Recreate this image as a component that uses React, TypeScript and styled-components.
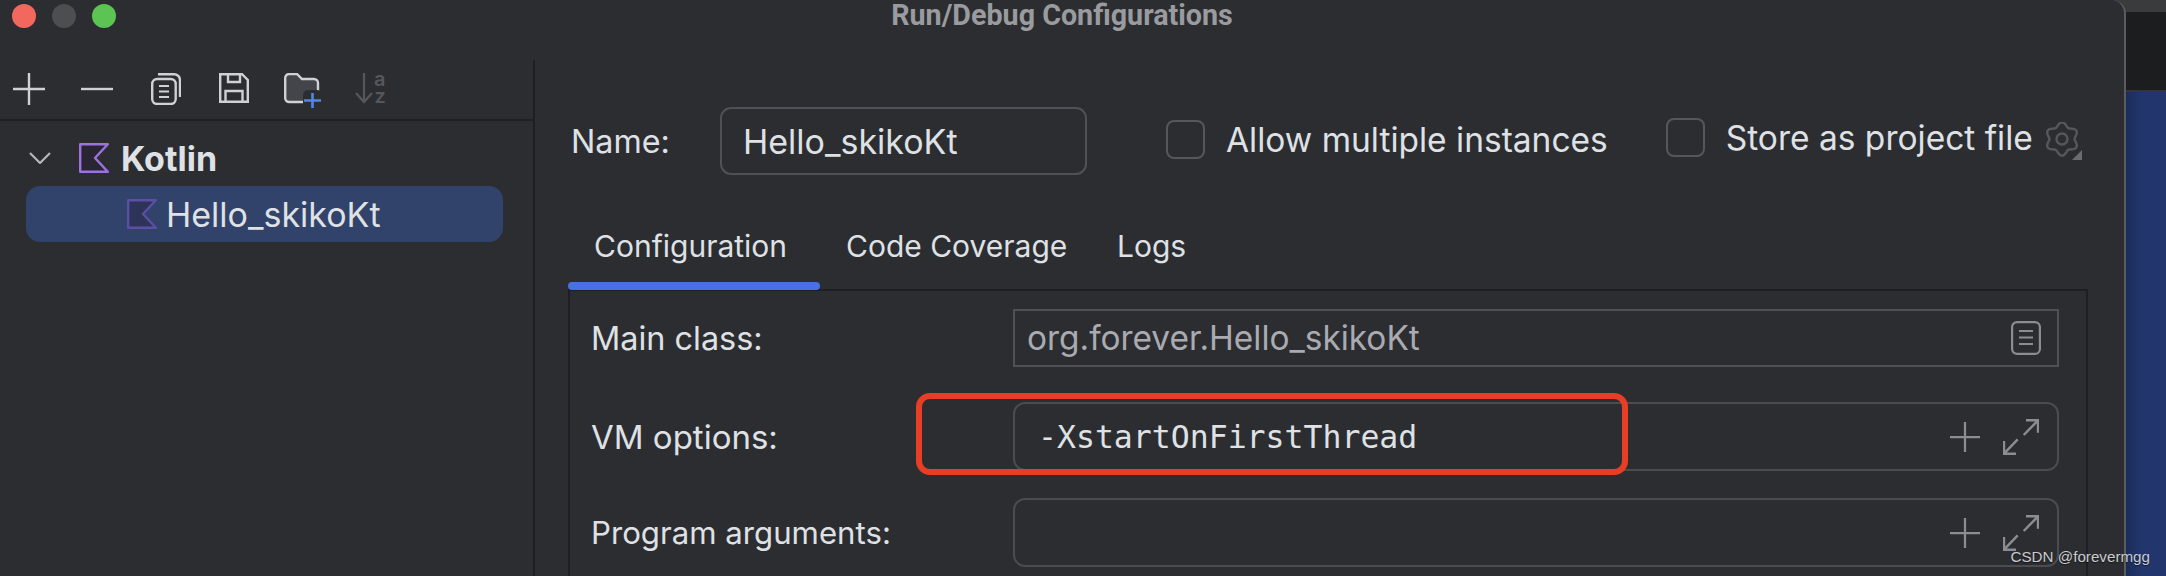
import * as React from 'react';
import styled, { createGlobalStyle } from 'styled-components';

const GlobalStyle = createGlobalStyle`
  html, body { margin: 0; padding: 0; background: #2c2d31; }
`

const Screen = styled.div`
  position: relative;
  display: flex;
  width: 2166px;
  height: 576px;
  overflow: hidden;
  background: #3a3b3d;
  font-family: Inter, "Liberation Sans", sans-serif;
  color: #dfe1e5;
`
const Window = styled.div`
  width: 2126px;
  height: 576px;
  box-sizing: border-box;
  flex: none;
  background: #2c2d31;
  border-right: 2px solid #5b5c60;
  border-top-right-radius: 14px;
  display: flex;
  flex-direction: column;
`
const TitleBar = styled.div`
  height: 60px;
  flex: none;
  display: grid;
  grid-template-columns: 1fr auto 1fr;
`
const Lights = styled.div`
  display: flex;
  gap: 16px;
  padding: 4px 0 0 12px;
`
const Light = styled.span<{ $color: string }>`
  width: 24px;
  height: 24px;
  border-radius: 50%;
  background: ${p => p.$color};
`
const Title = styled.div`
  font-family: Roboto, sans-serif;
  font-weight: 700;
  font-size: 28.7px;
  line-height: 30px;
  color: #9a9b9e;
`
const Body = styled.div`
  flex: 1;
  display: flex;
  min-height: 0;
`
const Sidebar = styled.div`
  width: 535px;
  flex: none;
  box-sizing: border-box;
  border-right: 2px solid #1e1f22;
`
const Toolbar = styled.div`
  height: 61px;
  box-sizing: border-box;
  border-bottom: 2px solid #1e1f22;
  padding: 13px 0 0 13px;
  display: grid;
  grid-template-columns: 68px 70px 68px 65px 71px auto;
  align-items: start;
`
const Tree = styled.div`
  padding-top: 22px;
`
const KotlinRow = styled.div`
  height: 30px;
  display: flex;
  align-items: center;
  padding-left: 29px;
  font-weight: 700;
  font-size: 34px;
`
const KotlinSlot = styled.span`
  display: flex;
  margin-left: 28px;
`
const KotlinLabel = styled.span`
  margin-left: 12px;
`
const SelectedRow = styled.div`
  margin: 13px 0 0 26px;
  width: 477px;
  height: 56px;
  border-radius: 14px;
  background: #31426b;
  display: flex;
  align-items: center;
  gap: 9px;
  padding-left: 101px;
  box-sizing: border-box;
  font-size: 34px;
`
const Main = styled.div`
  flex: 1;
  min-width: 0;
  padding: 47px 0 0 33px;
`
const NameRow = styled.div`
  display: flex;
  align-items: center;
  padding-left: 3px;
  height: 68px;
  font-size: 33.5px;
`
const NameLabel = styled.span`
  width: 149px;
  font-size: 32.3px;
`
const NameInput = styled.div`
  width: 367px;
  height: 68px;
  box-sizing: border-box;
  border: 2px solid #4e5157;
  border-radius: 11px;
  padding-left: 21px;
  display: flex;
  align-items: center;
  font-size: 34px;
`
const CheckGroup = styled.label<{ $left: number; $raise: number }>`
  display: flex;
  align-items: center;
  gap: 21px;
  margin-left: ${p => p.$left}px;
  margin-bottom: ${p => p.$raise}px;
`
const CheckBox = styled.span`
  width: 39px;
  height: 39px;
  box-sizing: border-box;
  border: 2px solid #55575c;
  border-radius: 8px;
`
const GearSlot = styled.span`
  display: flex;
  margin: 0 0 0 12px;
`
const Tabs = styled.div`
  display: grid;
  grid-template-columns: 252px 271px auto;
  justify-content: start;
  margin-top: 35px;
  height: 80px;
  font-size: 30px;
`
const Tab = styled.div<{ $active?: boolean }>`
  position: relative;
  padding: 18px 0 0 26px;
  line-height: 36px;
  &::after {
    content: '';
    display: ${p => (p.$active ? 'block' : 'none')};
    position: absolute;
    left: 0;
    right: 0;
    bottom: 0;
    height: 8px;
    border-radius: 4px;
    background: #4671e5;
  }
`
const Panel = styled.div`
  width: 1520px;
  height: 290px;
  margin-top: -1px;
  box-sizing: border-box;
  border: 2px solid #1e1f22;
  border-bottom: none;
  padding: 18px 27px 0 21px;
`
const FormRow = styled.div<{ $gap: number }>`
  display: grid;
  grid-template-columns: 422px 1fr;
  align-items: center;
  margin-bottom: ${p => p.$gap}px;
`
const RowLabel = styled.span<{ $size: number }>`
  font-size: ${p => p.$size}px;
`
const ReadonlyField = styled.div`
  height: 58px;
  box-sizing: border-box;
  border: 2px solid #4e5157;
  padding: 0 16px 0 12px;
  display: flex;
  align-items: center;
  justify-content: space-between;
  font-size: 33.4px;
  color: #a9abb0;
`
const EditField = styled.div`
  height: 69px;
  box-sizing: border-box;
  border: 2px solid #4a4c51;
  border-radius: 12px;
  padding: 0 18px 0 23px;
  display: flex;
  align-items: center;
  justify-content: space-between;
`
const Mono = styled.span`
  font-family: "DejaVu Sans Mono", "Liberation Mono", monospace;
  font-size: 31.5px;
`
const FieldActions = styled.span`
  display: flex;
  align-items: center;
  gap: 23px;
  margin-left: auto;
`
const Highlight = styled.div`
  position: absolute;
  left: 916px;
  top: 393px;
  width: 712px;
  height: 82px;
  box-sizing: border-box;
  border: 6px solid #e83e26;
  border-radius: 14px;
`
const Strip = styled.div`
  flex: 1;
  display: flex;
  flex-direction: column;
`
const StripTop = styled.div`
  height: 12px;
  background: #3a3b3d;
`
const StripDark = styled.div`
  height: 78px;
  background: #1c1d1f;
  border-bottom: 2px solid #343538;
`
const StripBlue = styled.div`
  flex: 1;
  background: linear-gradient(90deg, #1c2c59, #22366d 40%);
`
const Watermark = styled.div`
  position: absolute;
  right: 16px;
  bottom: 9px;
  font-family: "Liberation Sans", sans-serif;
  font-size: 15.2px;
  line-height: 20px;
  color: #c9cbce;
  text-shadow: 0 1px 1px rgba(0, 0, 0, 0.5);
`

const lineIcon = { fill: 'none', strokeWidth: 2.4 }

const PlusIcon = ({ size = 32, color = '#cfd1d5' }: { size?: number; color?: string }) => (
  <svg width={size} height={size} viewBox="0 0 32 32" stroke={color} {...lineIcon}>
    <path d="M16 0V32M0 16H32" />
  </svg>
)
const MinusIcon = () => (
  <svg width="32" height="32" viewBox="0 0 32 32" stroke="#cfd1d5" {...lineIcon}>
    <path d="M0 16H32" />
  </svg>
)
const CopyIcon = () => (
  <svg width="30" height="32" viewBox="0 0 30 32" stroke="#cfd1d5" {...lineIcon}>
    <rect x="1.2" y="6" width="23.5" height="25" rx="5" />
    <path d="M7 1.2H23a6 6 0 0 1 6 6V24" />
    <path d="M8 13H18M8 18.5H18M8 24H18" strokeWidth="2" />
  </svg>
)
const SaveIcon = () => (
  <svg width="30" height="30" viewBox="0 0 30 30" stroke="#cfd1d5" {...lineIcon}>
    <path d="M1.2 1.2H23L28.8 7V28.8H1.2Z" />
    <path d="M9 1.2V9H21V1.2M6.5 28.8V18H23.5V28.8" />
  </svg>
)
const FolderAddIcon = () => (
  <svg width="38" height="36" viewBox="0 0 38 36">
    <path
      d="M1.2 5a4 4 0 0 1 4-4H13L18 6H30a4 4 0 0 1 4 4V25a4 4 0 0 1-4 4H5.2a4 4 0 0 1-4-4Z"
      fill="#43454a"
      stroke="#cfd1d5"
      strokeWidth="2.4"
    />
    <rect x="19" y="17" width="19" height="19" rx="5" fill="#2c2d31" />
    <path d="M28.5 20V35M20 27.5H37" stroke="#5484f0" strokeWidth="2.6" fill="none" />
  </svg>
)
const SortIcon = () => (
  <svg
    width="31"
    height="31"
    viewBox="0 0 31 31"
    overflow="visible"
    fontFamily="Inter, sans-serif"
    fontWeight="600"
    fontSize="20"
    fill="#55575c"
  >
    <path d="M9 0V29M1 20L9 29L17 20" stroke="#55575c" strokeWidth="2.2" fill="none" />
    <text x="19" y="13">a</text>
    <text x="19.5" y="30">z</text>
  </svg>
)
const ChevronIcon = () => (
  <svg width="22" height="12" viewBox="0 0 22 12" fill="none" stroke="#b4b6ba" strokeWidth="2.2">
    <path d="M1 1L11 11L21 1" />
  </svg>
)
const KotlinIcon = ({ dim }: { dim?: boolean }) => (
  <svg
    width="30"
    height="30"
    viewBox="0 0 30 30"
    fill={dim ? '#2e3358' : '#2a2532'}
    stroke={dim ? '#5c4ea3' : '#9c72de'}
    strokeWidth="2.4"
    strokeLinejoin="round"
  >
    <path d="M1.2 1.2H28.8L16 15L28.8 28.8H1.2Z" />
  </svg>
)
const gearPath = () => {
  const points: string[] = []
  for (let i = 0; i < 120; i++) {
    const a = (i / 120) * Math.PI * 2
    const r = 14.6 + 2 * Math.cos(6 * a)
    const x = 17 + r * Math.sin(a)
    const y = 17 - r * Math.cos(a)
    points.push(`${x.toFixed(2)} ${y.toFixed(2)}`)
  }
  return `M${points.join('L')}Z`
}
const GearIcon = () => (
  <svg width="38" height="38" viewBox="0 0 38 38" fill="none" stroke="#55575c" strokeWidth="2.4">
    <path d={gearPath()} />
    <circle cx="17" cy="17" r="5.5" />
    <path d="M27 38L37 28V38Z" fill="#6a6c70" stroke="none" />
  </svg>
)
const DocIcon = () => (
  <svg width="30" height="34" viewBox="0 0 30 34" fill="none" stroke="#8b8d91" strokeWidth="2.2">
    <rect x="1.1" y="1.1" width="27.8" height="31.8" rx="5" />
    <path d="M8 10H22M8 16.5H22M8 23H22" />
  </svg>
)
const ExpandIcon = () => (
  <svg width="36" height="36" viewBox="0 0 36 36" fill="none" stroke="#8b8d91" strokeWidth="2.4">
    <path d="M20.7 16L35 1.3M23 1.3H35V13.7M14.7 20.3L1 34.7M1 22V34.7H13" />
  </svg>
)

const App = () => (
  <Screen>
    <GlobalStyle />
    <Window>
      <TitleBar>
        <Lights>
          <Light $color="#f2685e" />
          <Light $color="#4d4e50" />
          <Light $color="#5cc452" />
        </Lights>
        <Title>Run/Debug Configurations</Title>
      </TitleBar>
      <Body>
        <Sidebar>
          <Toolbar>
            <PlusIcon />
            <MinusIcon />
            <CopyIcon />
            <SaveIcon />
            <FolderAddIcon />
            <SortIcon />
          </Toolbar>
          <Tree>
            <KotlinRow>
              <ChevronIcon />
              <KotlinSlot>
                <KotlinIcon />
              </KotlinSlot>
              <KotlinLabel>Kotlin</KotlinLabel>
            </KotlinRow>
            <SelectedRow>
              <KotlinIcon dim />
              <span>Hello_skikoKt</span>
            </SelectedRow>
          </Tree>
        </Sidebar>
        <Main>
          <NameRow>
            <NameLabel>Name:</NameLabel>
            <NameInput>Hello_skikoKt</NameInput>
            <CheckGroup $left={79} $raise={3}>
              <CheckBox />
              Allow multiple instances
            </CheckGroup>
            <CheckGroup $left={58} $raise={7}>
              <CheckBox />
              Store as project file
            </CheckGroup>
            <GearSlot>
              <GearIcon />
            </GearSlot>
          </NameRow>
          <Tabs>
            <Tab $active>Configuration</Tab>
            <Tab>Code Coverage</Tab>
            <Tab>Logs</Tab>
          </Tabs>
          <Panel>
            <FormRow $gap={35}>
              <RowLabel $size={32.4}>Main class:</RowLabel>
              <ReadonlyField>
                org.forever.Hello_skikoKt
                <DocIcon />
              </ReadonlyField>
            </FormRow>
            <FormRow $gap={27}>
              <RowLabel $size={33}>VM options:</RowLabel>
              <EditField>
                <Mono>-XstartOnFirstThread</Mono>
                <FieldActions>
                  <PlusIcon size={30} color="#8b8d91" />
                  <ExpandIcon />
                </FieldActions>
              </EditField>
            </FormRow>
            <FormRow $gap={0}>
              <RowLabel $size={31.2}>Program arguments:</RowLabel>
              <EditField>
                <FieldActions>
                  <PlusIcon size={30} color="#8b8d91" />
                  <ExpandIcon />
                </FieldActions>
              </EditField>
            </FormRow>
          </Panel>
        </Main>
      </Body>
    </Window>
    <Strip>
      <StripTop />
      <StripDark />
      <StripBlue />
    </Strip>
    <Highlight />
    <Watermark>CSDN @forevermgg</Watermark>
  </Screen>
)

export default App
